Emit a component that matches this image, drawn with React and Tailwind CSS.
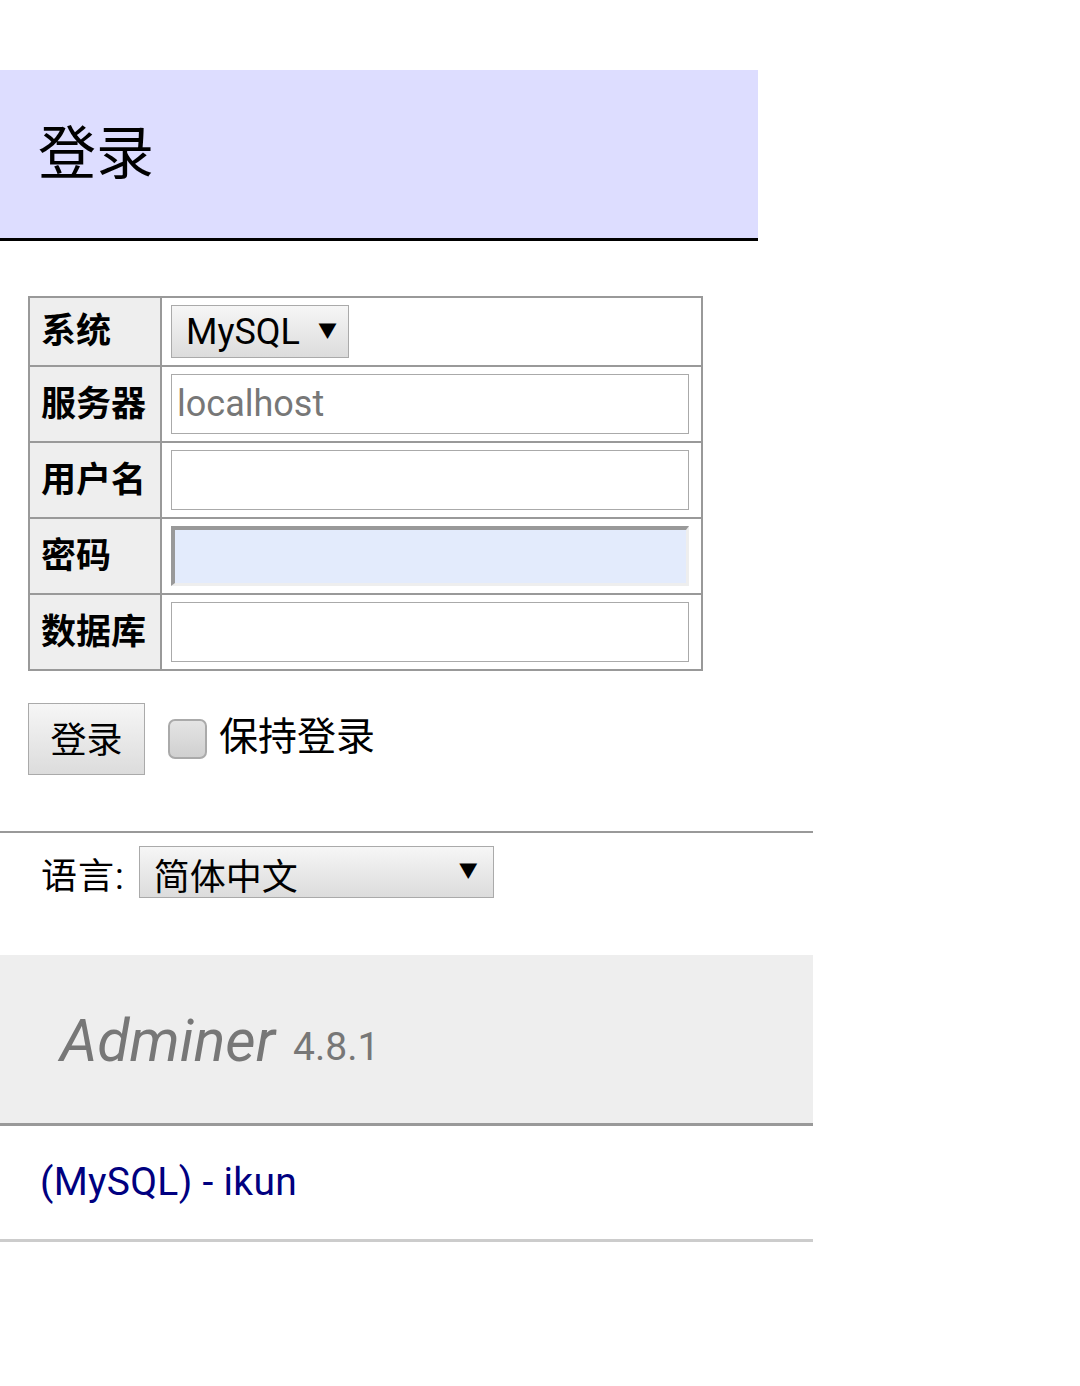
export default function App() {
  const font = "font-['Roboto','Noto_Sans_CJK_SC',sans-serif]";
  const rows = [
    { label: "系统", type: "select" },
    { label: "服务器", type: "server" },
    { label: "用户名", type: "text" },
    { label: "密码", type: "password" },
    { label: "数据库", type: "text" },
  ];
  return (
    <div className={`${font} bg-white w-[1080px] min-h-[1386px] text-black`}>
      <div className="h-[70px]" />
      <div className="w-[758px] h-[171px] bg-[#ddf] border-b-[3px] border-black flex items-center pl-[38px]">
        <h1 className="text-[58px] leading-none font-normal">登录</h1>
      </div>
      <div className="pl-[28px] pt-[55px]">
        <table className="border-collapse border-2 border-[#999] w-[675px]">
          <tbody>
            {rows.map((r, i) => (
              <tr key={r.label} className={i === 0 ? "h-[69px]" : "h-[76px]"}>
                <th className="w-[132px] bg-[#eee] border-2 border-[#999] text-left pl-[11px] text-[35px] font-bold leading-none">
                  {r.label}
                </th>
                <td className="border-2 border-[#999] pl-[9px] pr-[12px]">
                  {r.type === "select" && (
                    <div className="w-[178px] h-[53px] border border-[#aaa] bg-gradient-to-b from-[#f6f6f6] to-[#dcdcdc] flex items-center pl-[14px] text-[36px] leading-none">
                      <span>MySQL</span>
                      <span className="ml-[18px] text-[19px]">▼</span>
                    </div>
                  )}
                  {r.type === "server" && (
                    <div className="w-[518px] h-[60px] border border-[#aaa] bg-white flex items-center pl-[5px] text-[36px] text-[#777] leading-none">
                      localhost
                    </div>
                  )}
                  {r.type === "text" && (
                    <div className="w-[518px] h-[60px] border border-[#aaa] bg-white" />
                  )}
                  {r.type === "password" && (
                    <div className="w-[518px] h-[60px] border-t-[4px] border-l-[4px] border-r-[3px] border-b-[3px] border-t-[#999] border-l-[#999] border-r-[#eee] border-b-[#eee] bg-[#e3ebfc]" />
                  )}
                </td>
              </tr>
            ))}
          </tbody>
        </table>
        <div className="flex items-center mt-[32px]">
          <div className="w-[117px] h-[72px] border border-[#aaa] bg-gradient-to-b from-[#f6f6f6] to-[#dcdcdc] flex items-center justify-center text-[36px] leading-none pt-[4px]">
            登录
          </div>
          <div className="ml-[23px] w-[39px] h-[40px] rounded-[7px] border-2 border-[#aaa] bg-gradient-to-b from-[#e4e4e4] to-[#d0d0d0]" />
          <span className="ml-[12px] text-[39px] leading-none mt-[-4px]">保持登录</span>
        </div>
      </div>
      <div className="w-[813px] mt-[56px] border-t-2 border-[#999]" />
      <div className="flex items-center pl-[41px] pt-[13px]">
        <span className="text-[36px] leading-none mt-[10px] tracking-[1px]">语言:</span>
        <div className="ml-[14px] w-[355px] h-[52px] border border-[#aaa] bg-gradient-to-b from-[#f6f6f6] to-[#dcdcdc] flex items-start justify-between pl-[14px] pr-[15px] overflow-hidden">
          <span className="text-[36px] leading-none mt-[13px]">简体中文</span>
          <span className="text-[19px] leading-none mt-[15px]">▼</span>
        </div>
      </div>
      <div className="w-[813px] h-[171px] mt-[57px] bg-[#eee] border-b-[3px] border-[#999] flex items-center pl-[60px] pt-[2px] text-[#777]">
        <span className="italic text-[59px] leading-none">Adminer</span>
        <span className="ml-[18px] text-[39px] leading-none mt-[14px]">4.8.1</span>
      </div>
      <div className="w-[813px] h-[116px] border-b-[3px] border-[#ccc] flex items-center pl-[40px]">
        <span className="text-[39px] leading-none text-[#000080] tracking-[0.3px]">(MySQL) - ikun</span>
      </div>
    </div>
  );
}
